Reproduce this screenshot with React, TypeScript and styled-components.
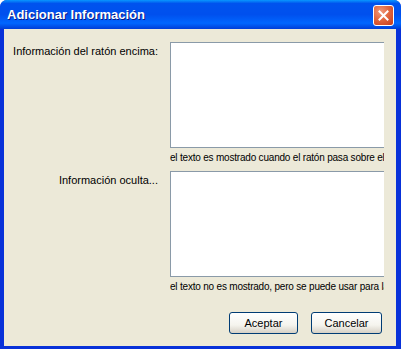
import React from 'react';
import styled, { createGlobalStyle } from 'styled-components';

const GlobalStyle = createGlobalStyle`
  html, body {
    margin: 0;
    padding: 0;
    background: #ffffff;
  }
  body {
    font-family: "Liberation Sans", Arial, sans-serif;
  }
`;

const fields = [
  {
    id: 1,
    label: 'Información del ratón encima:',
    hint: 'el texto es mostrado cuando el ratón pasa sobre el icono',
  },
  {
    id: 2,
    label: 'Información oculta...',
    hint: 'el texto no es mostrado, pero se puede usar para la búsqueda',
  },
];

const App = () => {
  return (
    <>
      <GlobalStyle />
      <Window>
        <TitleBar>
          <Title>Adicionar Información</Title>
          <CloseButton>
            <svg width="13" height="13" viewBox="0 0 13 13">
              <path d="M2.5 2.5 L10.5 10.5 M10.5 2.5 L2.5 10.5" stroke="#ffffff" strokeWidth="2" strokeLinecap="square" />
            </svg>
          </CloseButton>
        </TitleBar>
        <Body>
          {fields.map((f) => (
            <FieldRow key={f.id}>
              <Label>{f.label}</Label>
              <FieldColumn>
                <TextArea />
                <Hint>{f.hint}</Hint>
              </FieldColumn>
            </FieldRow>
          ))}
          <ButtonRow>
            <Button>Aceptar</Button>
            <Button $wide>Cancelar</Button>
          </ButtonRow>
        </Body>
      </Window>
    </>
  );
};

export default App;

const Window = styled.div`
  width: 401px;
  height: 349px;
  display: flex;
  flex-direction: column;
  background: #0831d9;
  border-radius: 7px 7px 0 0;
  overflow: hidden;
  box-sizing: border-box;
`;

const TitleBar = styled.div`
  height: 29px;
  flex-shrink: 0;
  display: flex;
  align-items: center;
  justify-content: space-between;
  padding: 0 7px 0 7px;
  background: linear-gradient(
    to bottom,
    #0997ff 0%,
    #0053ee 12%,
    #0050ee 50%,
    #0066ff 80%,
    #003dd7 100%
  );
`;

const Title = styled.span`
  color: #ffffff;
  font-family: "Liberation Sans", Arial, sans-serif;
  font-weight: bold;
  font-size: 13px;
  text-shadow: 1px 1px 0 #0a1883;
`;

const CloseButton = styled.div`
  width: 19px;
  height: 19px;
  margin-top: 2px;
  border: 1px solid #ffffff;
  border-radius: 3px;
  display: flex;
  align-items: center;
  justify-content: center;
  background: radial-gradient(circle at 35% 30%, #f09a7c 0%, #e2683f 45%, #c6391a 100%);
`;

const Body = styled.div`
  flex: 1;
  margin: 0 5px 3px 4px;
  background: #ece9d8;
  padding-top: 13px;
  display: flex;
  flex-direction: column;
`;

const FieldRow = styled.div`
  display: grid;
  grid-template-columns: 154px 214px;
  column-gap: 12px;
`;

const Label = styled.div`
  text-align: right;
  font-size: 11px;
  line-height: 14px;
  padding-top: 2px;
  color: #000000;
  white-space: nowrap;
`;

const FieldColumn = styled.div`
  overflow: hidden;
  display: flex;
  flex-direction: column;
`;

const TextArea = styled.div`
  width: 240px;
  height: 104px;
  background: #ffffff;
  border: 1px solid #8a9aa8;
`;

const Hint = styled.div`
  font-size: 10px;
  line-height: 14px;
  letter-spacing: -0.2px;
  padding-top: 3px;
  margin-bottom: 6px;
  color: #000000;
  white-space: nowrap;
`;

const ButtonRow = styled.div`
  display: flex;
  justify-content: flex-end;
  gap: 13px;
  padding-right: 14px;
  margin-top: 12px;
`;

const Button = styled.div<{ $wide?: boolean }>`
  width: ${(p) => (p.$wide ? '71px' : '69px')};
  height: 22px;
  box-sizing: border-box;
  border: 1px solid #003c74;
  border-radius: 3px;
  background: linear-gradient(to bottom, #ffffff 0%, #f5f4ee 60%, #d6d0c5 100%);
  display: flex;
  align-items: center;
  justify-content: center;
  font-size: 11px;
  color: #000000;
`;
